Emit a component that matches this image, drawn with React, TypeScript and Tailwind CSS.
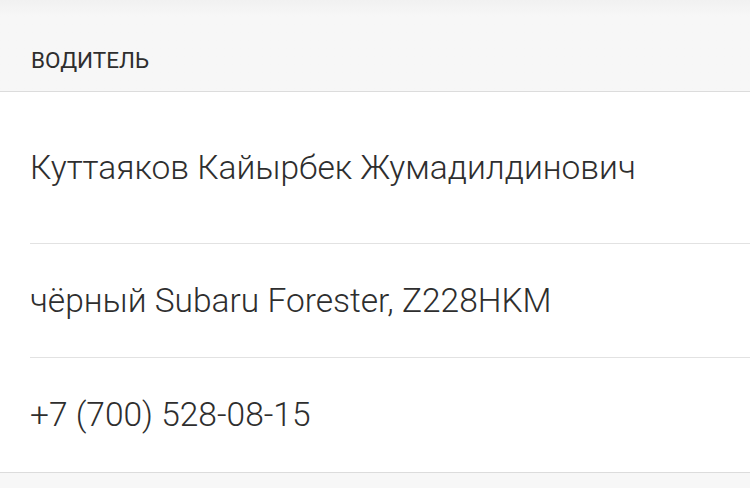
import React from 'react';

const rows = [
  { text: 'Куттаяков Кайырбек Жумадилдинович', h: 'h-[152px]' },
  { text: 'чёрный Subaru Forester, Z228HKM', h: 'h-[114px]' },
  { text: '+7 (700) 528-08-15', h: 'h-[114px]' },
];

export default function App() {
  return (
    <div
      className="w-[750px] h-[488px] overflow-hidden bg-[#f7f7f7] text-[#2e2e2e]"
      style={{ fontFamily: 'Roboto, "Liberation Sans", sans-serif' }}
    >
      {/* Section header */}
      <div className="h-[91px] flex items-end px-[31px] pb-[20px] bg-gradient-to-b from-[#f1f1f1] to-[#f7f7f7] to-[18%]">
        <span className="text-[22.5px] leading-none uppercase">Водитель</span>
      </div>

      {/* List */}
      <div className="bg-white border-y border-[#dcdcdc]">
        {rows.map((row, i) => (
          <div key={i} className="pl-[30px]">
            <div
              className={`${row.h} flex items-center ${i < rows.length - 1 ? 'border-b border-[#e2e2e2]' : ''}`}
            >
              <span className="text-[33.5px] leading-none font-light">{row.text}</span>
            </div>
          </div>
        ))}
      </div>
    </div>
  );
}
